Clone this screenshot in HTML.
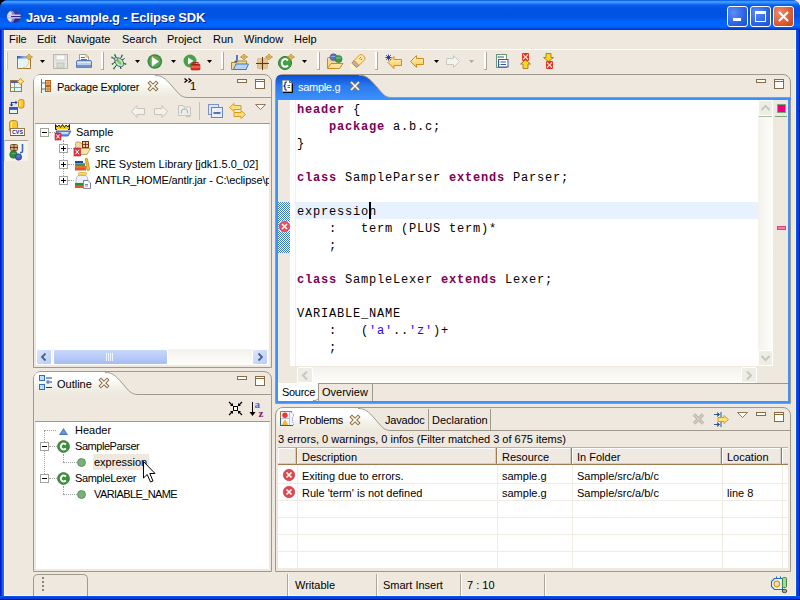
<!DOCTYPE html>
<html><head><meta charset="utf-8">
<style>
*{margin:0;padding:0;box-sizing:border-box}
html,body{width:800px;height:600px;overflow:hidden;background:#EEE8DF}
body{position:relative;font-family:"Liberation Sans",sans-serif;font-size:11px;color:#000}
.a{position:absolute}
.t{position:absolute;white-space:pre;line-height:13px}
svg{position:absolute;overflow:visible}
.code{position:absolute;font-family:"Liberation Mono",monospace;font-size:12px;letter-spacing:0.8px;line-height:17px;white-space:pre;color:#000}
.kw{color:#7F0055;font-weight:bold}
.str{color:#2A00FF}
</style></head><body>

<!-- window frame -->
<div class="a" style="left:0;top:0;width:8px;height:8px;background:#000"></div>
<div class="a" style="left:0;top:0;width:800px;height:600px;background:#0040D8;border-radius:8px 8px 0 0"></div>
<div class="a" style="left:0;top:30px;width:4px;height:570px;background:linear-gradient(90deg,#0014C0 0,#0020D0 1px,#0A58EC 2px,#1A6CF2 3px,#1A6CF2 4px)"></div>
<div class="a" style="left:796px;top:30px;width:4px;height:570px;background:linear-gradient(90deg,#0054F0 0,#0054F0 1px,#0040D8 1px,#0040D8 3px,#001878 3px)"></div>
<div class="a" style="left:0;top:596px;width:800px;height:4px;background:linear-gradient(#0054F0 0,#0054F0 1px,#0040D8 1px,#0040D8 3px,#001878 3px)"></div>
<div class="a" style="left:0;top:0;width:800px;height:30px;border-radius:8px 8px 0 0;background:linear-gradient(#0050E0 0px,#3C9AFF 1.5px,#3A96FF 2.5px,#0A5EEA 5px,#0054E3 8px,#0052E0 16px,#0062F8 21px,#0068FF 26px,#0058F0 27.5px,#0038C8 29.5px)"></div>
<div class="a" style="left:4px;top:30px;width:792px;height:566px;background:#EEE8DF;border-left:1px solid #FFF5E2;border-right:1px solid #FFF5E2;border-bottom:1px solid #FFF5E2"></div>

<!-- title -->
<svg style="left:7px;top:10px" width="14" height="13" viewBox="0 0 14 13"><defs><clipPath id="ec"><ellipse cx="7" cy="6.5" rx="6.8" ry="6.2"/></clipPath></defs><g clip-path="url(#ec)"><rect width="14" height="13" fill="#3C3C98"/><rect x="7" y="6" width="7" height="7" fill="#2A2A80"/><ellipse cx="2" cy="6.5" rx="5" ry="7" fill="#E8C8D8"/><ellipse cx="4" cy="6.5" rx="4" ry="6" fill="#8888C8"/><ellipse cx="2.5" cy="6.5" rx="2.5" ry="6" fill="#F0D8E8"/><rect x="0" y="4.5" width="14" height="1.5" fill="#C8C8F0"/><rect x="0" y="7" width="14" height="1.5" fill="#B8B8E8"/><rect x="4" y="6" width="10" height="1" fill="#2A2A80"/></g></svg>
<div class="t" style="left:26px;top:10px;color:#fff;font-weight:bold;font-size:13px;line-height:15px;letter-spacing:-0.2px;text-shadow:1px 1px 0 #0A1E8C">Java - sample.g - Eclipse SDK</div>
<!-- window buttons -->
<div class="a" style="left:727px;top:6px;width:21px;height:21px;border:1px solid #fff;border-radius:3px;background:radial-gradient(circle at 30% 30%,#5C8DF5,#2A63E6 60%,#1F4FD0)"></div>
<div class="a" style="left:733px;top:18px;width:8px;height:3px;background:#fff"></div>
<div class="a" style="left:750px;top:6px;width:21px;height:21px;border:1px solid #fff;border-radius:3px;background:radial-gradient(circle at 30% 30%,#5C8DF5,#2A63E6 60%,#1F4FD0)"></div>
<div class="a" style="left:755px;top:11px;width:11px;height:11px;border:1px solid #fff;border-top-width:3px"></div>
<div class="a" style="left:773px;top:6px;width:21px;height:21px;border:1px solid #fff;border-radius:3px;background:radial-gradient(circle at 30% 30%,#EC8A6E,#DC5B30 60%,#C8401A)"></div>
<svg style="left:778px;top:11px" width="11" height="11"><path d="M1 1L10 10M10 1L1 10" stroke="#fff" stroke-width="2"/></svg>

<!-- menu -->
<div class="t" style="left:9px;top:33px">File</div>
<div class="t" style="left:37px;top:33px">Edit</div>
<div class="t" style="left:67px;top:33px">Navigate</div>
<div class="t" style="left:122px;top:33px">Search</div>
<div class="t" style="left:167px;top:33px">Project</div>
<div class="t" style="left:213px;top:33px">Run</div>
<div class="t" style="left:244px;top:33px">Window</div>
<div class="t" style="left:294px;top:33px">Help</div>
<div class="a" style="left:4px;top:49px;width:792px;height:1px;background:#fff"></div>


<!-- toolbar -->
<div class="a" style="left:6px;top:52px;width:2px;height:18px;border-left:1px solid #fff;border-right:1px solid #C7C3AE"></div>
<div class="a" style="left:101px;top:52px;width:3px;height:18px;background:linear-gradient(90deg,#fff 0,#fff 2px,#ACA899 2px);border-bottom:1px solid #ACA899"></div>
<div class="a" style="left:221px;top:52px;width:3px;height:18px;background:linear-gradient(90deg,#fff 0,#fff 2px,#ACA899 2px);border-bottom:1px solid #ACA899"></div>
<div class="a" style="left:317px;top:52px;width:3px;height:18px;background:linear-gradient(90deg,#fff 0,#fff 2px,#ACA899 2px);border-bottom:1px solid #ACA899"></div>
<div class="a" style="left:375px;top:52px;width:3px;height:18px;background:linear-gradient(90deg,#fff 0,#fff 2px,#ACA899 2px);border-bottom:1px solid #ACA899"></div>
<div class="a" style="left:484px;top:52px;width:3px;height:18px;background:linear-gradient(90deg,#fff 0,#fff 2px,#ACA899 2px);border-bottom:1px solid #ACA899"></div>
<!-- dropdown arrows -->
<svg style="left:40px;top:60px" width="5" height="3"><path d="M0 0H5L2.5 3Z" fill="#000"/></svg>
<svg style="left:135px;top:60px" width="5" height="3"><path d="M0 0H5L2.5 3Z" fill="#000"/></svg>
<svg style="left:171px;top:60px" width="5" height="3"><path d="M0 0H5L2.5 3Z" fill="#000"/></svg>
<svg style="left:207px;top:60px" width="5" height="3"><path d="M0 0H5L2.5 3Z" fill="#000"/></svg>
<svg style="left:302px;top:60px" width="5" height="3"><path d="M0 0H5L2.5 3Z" fill="#000"/></svg>
<svg style="left:434px;top:60px" width="5" height="3"><path d="M0 0H5L2.5 3Z" fill="#000"/></svg>
<svg style="left:469px;top:60px" width="5" height="3"><path d="M0 0H5L2.5 3Z" fill="#A8A8A8"/></svg>
<!-- new -->
<svg style="left:17px;top:54px" width="16" height="15"><defs><linearGradient id="nw" x1="0" x2="1"><stop offset="0" stop-color="#2A58C0"/><stop offset="1" stop-color="#B8D4F4"/></linearGradient></defs><path d="M0.5 2.5V14.5H13.5V4" stroke="#A87838" fill="#E6F2FC"/><rect x="0" y="2" width="11" height="2.5" fill="url(#nw)"/><path d="M12 6Q12.5 12.5 5 14" stroke="#F8D050" stroke-width="1" fill="none"/><path d="M12 0L13.3 1.7L15.5 3L13.3 4.3L12 6L10.7 4.3L8.5 3L10.7 1.7Z" fill="#FFE890" stroke="#B88020" stroke-width="0.8"/><path d="M12 1.2V4.8M10 3H14" stroke="#B88020" stroke-width="0.7"/></svg>
<!-- save disabled -->
<svg style="left:53px;top:54px" width="15" height="15"><rect x="0.5" y="0.5" width="14" height="14" fill="#E6E6E0" stroke="#B8B8B0"/><rect x="3" y="1" width="9" height="5" fill="#FAFAF8" stroke="#C0C0B8" stroke-width="0.6"/><rect x="4" y="9" width="7" height="5" fill="#D8D8D0" stroke="#B0B8A8" stroke-width="0.6"/></svg>
<!-- print -->
<svg style="left:76px;top:54px" width="16" height="15"><path d="M3.5 7V0.5H10L12.5 3V7" fill="#FAFAF6" stroke="#98A890"/><path d="M10 0.5V3H12.5" stroke="#E89040" fill="none" stroke-width="0.8"/><path d="M5 3.5H9M5 5.5H11" stroke="#4070C0"/><path d="M0.5 8Q0.5 6.5 2 6.5H14Q15.5 6.5 15.5 8V13.5H0.5Z" fill="#B8CCEC" stroke="#5878B8"/><path d="M1 8.5H15" stroke="#E0ECFC"/><rect x="1" y="11" width="14" height="2.5" fill="#7090D0"/></svg>
<!-- debug bug -->
<svg style="left:111px;top:54px" width="17" height="16"><path d="M4 1L5.5 4.5M1 3.5L4.5 5M1.5 10L4 8M3 14.5L5.5 11M11 1.5L9.5 4.5M13.5 4.5L11 6M14.5 10L11.5 9M10 15L9 11.5" stroke="#3A2A1A" stroke-width="1"/><circle cx="4" cy="1" r="0.9" fill="#2A9A3A"/><circle cx="1" cy="3.5" r="0.9" fill="#2A9A3A"/><circle cx="1.5" cy="10" r="0.9" fill="#2A9A3A"/><circle cx="3" cy="14.5" r="0.9" fill="#2A9A3A"/><circle cx="11" cy="1.5" r="0.9" fill="#2A9A3A"/><circle cx="14.5" cy="10" r="0.9" fill="#2A9A3A"/><ellipse cx="8.3" cy="8.3" rx="5.2" ry="3.6" transform="rotate(45 8.3 8.3)" fill="#C8E8B0" stroke="#2A6A8A" stroke-width="0.9"/><ellipse cx="8.3" cy="8.3" rx="3" ry="1.5" transform="rotate(45 8.3 8.3)" fill="#8AC070"/><circle cx="5" cy="5" r="1.8" fill="#A8D8A0" stroke="#2A6A8A" stroke-width="0.7"/></svg>
<!-- run -->
<svg style="left:147px;top:54px" width="16" height="16"><circle cx="7.8" cy="7.5" r="7.3" fill="#3A8A42"/><circle cx="7.8" cy="7.5" r="5.8" fill="#58A458"/><path d="M5 2.5L12 7.5L5 12.5Z" fill="#fff"/><path d="M5 2.5L9 5.3" stroke="#F0A030" stroke-width="1"/><path d="M5 2.5V12.5" stroke="#D0E8D0" stroke-width="0.6"/></svg>
<!-- ext tools -->
<svg style="left:183px;top:54px" width="17" height="16"><circle cx="7" cy="7" r="6.5" fill="#48A048"/><path d="M5 3.5L10.5 7L5 10.5Z" fill="#fff"/><rect x="8" y="10" width="9" height="6" rx="1" fill="#E03020" stroke="#A01810" stroke-width="0.6"/><rect x="10" y="8.5" width="5" height="2" fill="none" stroke="#A01810" stroke-width="0.8"/><path d="M8 13H17" stroke="#F8D0C8" stroke-width="0.6"/></svg>
<!-- new java project -->
<svg style="left:231px;top:54px" width="18" height="16"><path d="M0.5 8.5H6L7 7H15.5V15.5H0.5Z" fill="#F0D890" stroke="#A88838"/><path d="M2.5 15.5L5 10H17.5L15 15.5Z" fill="#B8D4F4" stroke="#4878C0"/><path d="M6 1V6Q6 8 3.5 7.5" stroke="#3060B8" stroke-width="1.6" fill="none"/><path d="M13 0L14.3 1.7L16.5 3L14.3 4.3L13 6L11.7 4.3L9.5 3L11.7 1.7Z" fill="#FFE890" stroke="#B88020" stroke-width="0.8"/><path d="M13 1.2V4.8M11 3H15" stroke="#B88020" stroke-width="0.7"/></svg>
<!-- new package -->
<svg style="left:256px;top:54px" width="17" height="16"><rect x="1.5" y="4.5" width="4.5" height="4.5" rx="1" fill="#E8C890" stroke="#C8A070" stroke-width="0.6"/><rect x="7" y="4.5" width="4.5" height="4.5" rx="1" fill="#E8C890" stroke="#C8A070" stroke-width="0.6"/><rect x="1.5" y="10" width="4.5" height="4.5" rx="1" fill="#E8C890" stroke="#C8A070" stroke-width="0.6"/><rect x="7" y="10" width="4.5" height="4.5" rx="1" fill="#E8C890" stroke="#C8A070" stroke-width="0.6"/><path d="M6.5 3V16M0 9.5H13" stroke="#5A3A1A" stroke-width="1"/><path d="M13 0L14.3 1.7L16.5 3L14.3 4.3L13 6L11.7 4.3L9.5 3L11.7 1.7Z" fill="#FFE890" stroke="#B88020" stroke-width="0.8"/><path d="M13 1.2V4.8M11 3H15" stroke="#B88020" stroke-width="0.7"/></svg>
<!-- new class -->
<svg style="left:278px;top:54px" width="17" height="16"><circle cx="7" cy="9" r="6.5" fill="#46A046" stroke="#2C7A2C"/><path d="M10 6.5Q7 3.5 4.5 6.5Q3 9 4.5 11.5Q7 14 10 11.5" stroke="#fff" stroke-width="2" fill="none"/><path d="M13 0L14.3 1.7L16.5 3L14.3 4.3L13 6L11.7 4.3L9.5 3L11.7 1.7Z" fill="#FFE890" stroke="#B88020" stroke-width="0.8"/><path d="M13 1.2V4.8M11 3H15" stroke="#B88020" stroke-width="0.7"/></svg>
<!-- open type -->
<svg style="left:326px;top:53px" width="18" height="16"><path d="M1.5 15.5V5.5Q1.5 4.5 2.5 4.5H5L6 5.5H13.5V15.5Z" fill="#F8D890" stroke="#D08820"/><path d="M1.5 15.5L5 10.5H17L13.5 15.5Z" fill="#FCE4A0" stroke="#D08820"/><circle cx="7.5" cy="4.2" r="3.4" fill="#6070C0" stroke="#3A4A9A" stroke-width="0.6"/><path d="M5 3.5H10" stroke="#A8B0E8" stroke-width="0.8"/><circle cx="12.5" cy="6" r="3.6" fill="#3A9A48" stroke="#2A7A38" stroke-width="0.6"/><path d="M10 5H15" stroke="#A0D8A0" stroke-width="0.8"/></svg>
<!-- search flashlight -->
<svg style="left:349px;top:53px" width="18" height="17"><g transform="rotate(-45 9 8.5)"><ellipse cx="2.5" cy="8.5" rx="3" ry="3.5" fill="#FFF8C0"/><path d="M3.5 5.5L7 5V12L3.5 11.5Z" fill="#B8B0B8" stroke="#A07040" stroke-width="0.7"/><path d="M7 5H15Q17 5.5 17 8.5Q17 11.5 15 12H7Z" fill="#FCE8A0" stroke="#E09020" stroke-width="0.9"/><path d="M12 7.5H14M12 9.5H14" stroke="#3050B0" stroke-width="0.8"/></g></svg>
<!-- last edit -->
<svg style="left:385px;top:54px" width="18" height="16"><defs><linearGradient id="ya" x1="0" y1="0" x2="0" y2="1"><stop offset="0" stop-color="#FFF4C0"/><stop offset="1" stop-color="#F8C850"/></linearGradient></defs><path d="M9 2.5L3 8.5L9 14.5V11.5H16.5V5.5H9Z" fill="url(#ya)" stroke="#D88A10"/><path d="M3.5 0.5V6.5M0.5 3.5H6.5M1.2 1.2L5.8 5.8M5.8 1.2L1.2 5.8" stroke="#1A2AB0" stroke-width="0.9"/></svg>
<!-- back -->
<svg style="left:410px;top:55px" width="15" height="14"><path d="M6.5 0.5L0.5 6.5L6.5 12.5V9.5H13.5V3.5H6.5Z" fill="url(#ya)" stroke="#D88A10"/></svg>
<!-- forward disabled -->
<svg style="left:446px;top:55px" width="15" height="14"><path d="M7.5 0.5L13.5 6.5L7.5 12.5V9.5H0.5V3.5H7.5Z" fill="#F4F4EE" stroke="#C8C8C0"/></svg>
<!-- doc icon -->
<svg style="left:496px;top:54px" width="13" height="14"><rect x="0.5" y="0.5" width="10" height="13" fill="#fff" stroke="#6A9A6A"/><path d="M2 3H8" stroke="#3A5A9A"/><circle cx="2" cy="3" r="0.6" fill="#3A5A9A"/><rect x="2.5" y="5.5" width="9.5" height="7.5" fill="#fff" stroke="#3A5AA0"/><path d="M5 8H10M5 10.5H10" stroke="#3A5A9A"/><rect x="3.5" y="7.5" width="1" height="1" fill="#3A5A9A"/><rect x="3.5" y="10" width="1" height="1" fill="#3A5A9A"/></svg>
<!-- next annotation -->
<svg style="left:520px;top:53px" width="12" height="16"><rect x="2" y="0" width="7" height="8" rx="1" fill="#E83020"/><path d="M3 1.5L8 6.5M8 1.5L3 6.5" stroke="#FFD8D0" stroke-width="1.1"/><path d="M5.5 7L10.5 11H8V15.5H3V11H0.5Z" fill="#F8D820" stroke="#9A7010" stroke-width="0.8"/></svg>
<!-- prev annotation -->
<svg style="left:543px;top:53px" width="12" height="16"><path d="M5.5 8.5L10.5 4.5H8V0.5H3V4.5H0.5Z" fill="#F8D820" stroke="#9A7010" stroke-width="0.8"/><rect x="3" y="8" width="7" height="8" rx="1" fill="#E83020"/><path d="M4 9.5L9 14.5M9 9.5L4 14.5" stroke="#FFD8D0" stroke-width="1.1"/></svg>

<!-- shortcut bar -->
<svg style="left:10px;top:78px" width="15" height="15"><rect x="0.5" y="2.5" width="11" height="11" fill="#E6F4FA" stroke="#9A7848"/><rect x="1" y="3" width="10" height="2" fill="#2A50B0"/><path d="M1 4H10" stroke="#7AA0E0" stroke-width="0.5"/><path d="M4.5 5V13M1 9.5H11" stroke="#A89880"/><path d="M4.5 10V13" stroke="#60A060"/><path d="M10.5 0L11.8 2.2L14 3.5L11.8 4.8L10.5 7L9.2 4.8L7 3.5L9.2 2.2Z" fill="#FFE890" stroke="#C89020" stroke-width="0.8"/></svg>
<svg style="left:9px;top:99px" width="16" height="16"><path d="M2.5 6.5V3.5H7" stroke="#1A3AB0" stroke-width="1.2" fill="none"/><path d="M6.5 1.5L8.5 3.5L6.5 5.5Z" fill="#1A3AB0"/><path d="M0.5 5.5L2.5 7.5L4.5 5.5Z" fill="#1A3AB0"/><rect x="9.5" y="0.5" width="5.5" height="8.5" rx="2" fill="#F8C830" stroke="#C08A10" stroke-width="0.9"/><path d="M11 2V7.5" stroke="#FFF0A0" stroke-width="1"/><rect x="0.5" y="8.5" width="8" height="6" fill="#E8F4FA" stroke="#3A6A8A"/><rect x="1" y="9" width="7" height="1.8" fill="#2A50B0"/></svg>
<svg style="left:9px;top:120px" width="16" height="17"><rect x="0.5" y="0.5" width="8" height="12" rx="2.5" fill="#F8C830" stroke="#C08A10" stroke-width="0.9"/><path d="M2.5 2V11" stroke="#FFF0A0" stroke-width="1.2"/><rect x="1.5" y="8.5" width="14" height="7" fill="#fff" stroke="#9A7848"/><path d="M1.5 15.5H15.5" stroke="#3A5AB0"/><text x="8.5" y="14" font-family="Liberation Sans" font-size="6" font-weight="bold" fill="#10208A" text-anchor="middle" textLength="11" lengthAdjust="spacingAndGlyphs">CVS</text></svg>
<div class="a" style="left:4px;top:140px;width:24px;height:21px;background:#F6F2EC;border-top:1px solid #ACA899;border-left:1px solid #D8D2C4"></div>
<svg style="left:9px;top:143px" width="16" height="18"><rect x="1.5" y="1.5" width="7" height="6" rx="1" fill="#D8A878" stroke="#7A5030" stroke-width="0.9"/><path d="M5 1V8M1 4.5H9" stroke="#4A2A10" stroke-width="0.8"/><path d="M13.5 1V8Q13.5 10 11 9.5" stroke="#3A6AB8" stroke-width="1.6" fill="none"/><circle cx="4.5" cy="11.5" r="3.8" fill="#2E8A3E" stroke="#1A6A2A" stroke-width="0.6"/><path d="M2.5 10.5H6.5" stroke="#80C880" stroke-width="0.6"/><circle cx="9.5" cy="14" r="3.2" fill="#4A60B8" stroke="#2A3A90" stroke-width="0.6"/><path d="M8 13H11" stroke="#A0B0F0" stroke-width="0.6"/></svg>
<!-- main area -->

<!-- ===== Package Explorer ===== -->
<div class="a" style="left:33px;top:74px;width:239px;height:294px;border:1px solid #9D9A8D;border-radius:8px 8px 0 0;background:#EEE8DF"></div>
<!-- tab -->
<svg style="left:34px;top:75px" width="237" height="23"><defs><linearGradient id="tg" x1="0" y1="0" x2="0" y2="1"><stop offset="0" stop-color="#FFFFFF"/><stop offset="0.28" stop-color="#FFFFFF"/><stop offset="0.65" stop-color="#F4F3EA"/><stop offset="1" stop-color="#ECEADD"/></linearGradient></defs><path d="M0 22V6Q0 0 6 0H121C128 0 131 3 138 11C145 19 147 22 154 22Z" fill="url(#tg)"/><path d="M121 0.5C128 0.5 131 3 138 11C145 19 147 22.5 154 22.5H237" stroke="#9D9A8D" fill="none"/></svg>

<svg style="left:40px;top:79px" width="12" height="14"><path d="M1.5 0V14M1 4H5M1 10H5" stroke="#3A7A9A" stroke-width="1"/><rect x="5.5" y="1.5" width="5" height="5" fill="#F0C070" stroke="#B06020"/><rect x="5.5" y="7.5" width="5" height="5" fill="#F0C070" stroke="#B06020"/><path d="M8 2V6M6 4H10M8 8V12M6 10H10" stroke="#B06020" stroke-width="0.6"/></svg>
<div class="t" style="left:57px;top:81px;letter-spacing:-0.3px">Package Explorer</div>
<svg style="left:148px;top:81px" width="10" height="10"><path d="M2 2L8 8M8 2L2 8" stroke="#8E6A3A" stroke-width="3.6" stroke-linecap="square"/><path d="M2 2L8 8M8 2L2 8" stroke="#FFFFFF" stroke-width="1.6" stroke-linecap="square"/></svg>
<svg style="left:184px;top:78px" width="9" height="6"><path d="M0.5 0.5L3 2.5L0.5 4.5M4.5 0.5L7 2.5L4.5 4.5" stroke="#000" stroke-width="1.3" fill="none"/></svg>
<div class="t" style="left:190px;top:80px;font-size:11px">1</div>
<!-- min/max -->
<div class="a" style="left:237px;top:79px;width:10px;height:4px;border:1px solid #8A6A40;background:#fff"></div>
<div class="a" style="left:255px;top:79px;width:10px;height:10px;border:1px solid #8A6A40;background:linear-gradient(#fff 0,#fff 1px,#8A6A40 1px,#8A6A40 2px,#fff 2px)"></div>
<!-- view toolbar -->
<svg style="left:131px;top:105px" width="15" height="13"><path d="M6 0.5L0.5 6.5L6 12.5V9.5H13.5V3.5H6Z" fill="#F2F2EA" stroke="#C4C4BC"/></svg>
<svg style="left:154px;top:105px" width="15" height="13"><path d="M8 0.5L13.5 6.5L8 12.5V9.5H0.5V3.5H8Z" fill="#F2F2EA" stroke="#C4C4BC"/></svg>
<svg style="left:178px;top:104px" width="15" height="15"><path d="M0.5 3V1.5H5L6 3H12.5V11.5H0.5Z" fill="#F0F0EA" stroke="#C4C4BC"/><path d="M3.5 9.5V8Q3.5 5 6.5 5Q9.5 5 9.5 8V9.5" stroke="#A8B8D0" stroke-width="1.2" fill="none"/><path d="M6.5 3.5L4.5 6H8.5Z" fill="#B8D0B8"/><path d="M8 12.5H12.5" stroke="#C8C8C0" stroke-width="1.5"/></svg>
<div class="a" style="left:199px;top:102px;width:1px;height:18px;background:#C7C3AE"></div>
<svg style="left:208px;top:104px" width="15" height="14"><rect x="0.5" y="0.5" width="10" height="10" fill="#DDE6F6" stroke="#7A94C8"/><rect x="3.5" y="3.5" width="11" height="10" fill="#E8EEFA" stroke="#6A84C0"/><path d="M5.5 9H12.5" stroke="#1A3A98" stroke-width="1.4"/></svg>
<svg style="left:229px;top:103px" width="18" height="17"><path d="M5 0.5L0.5 4.5L5 8.5V6.5H12V2.5H5Z" fill="#FCE07A" stroke="#D89A20"/><path d="M12 7.5L16.5 11.5L12 15.5V13.5H5V9.5H12Z" fill="#FCE07A" stroke="#D89A20"/></svg>
<svg style="left:255px;top:104px" width="11" height="6"><path d="M0.5 0.5H10.5L5.5 5.5Z" fill="#fff" stroke="#9A7A50"/></svg>
<!-- tree area -->
<div class="a" style="left:35px;top:123px;width:235px;height:1px;background:#9D9A8D"></div>
<div class="a" style="left:36px;top:124px;width:233px;height:225px;background:#fff"></div>
<!-- tree lines -->
<div class="a" style="left:49px;top:132px;width:6px;border-top:1px dotted #A0A0A0"></div>
<div class="a" style="left:63px;top:140px;height:40px;border-left:1px dotted #A0A0A0"></div>
<div class="a" style="left:68px;top:148px;width:6px;border-top:1px dotted #A0A0A0"></div>
<div class="a" style="left:68px;top:164px;width:6px;border-top:1px dotted #A0A0A0"></div>
<div class="a" style="left:68px;top:180px;width:6px;border-top:1px dotted #A0A0A0"></div>
<!-- expand boxes -->
<div class="a" style="left:40px;top:128px;width:9px;height:9px;border:1px solid #A4A49C;background:#fff"></div><div class="a" style="left:42px;top:132px;width:5px;height:1px;background:#000"></div>
<div class="a" style="left:59px;top:144px;width:9px;height:9px;border:1px solid #A4A49C;background:#fff"></div><div class="a" style="left:61px;top:148px;width:5px;height:1px;background:#000"></div><div class="a" style="left:63px;top:146px;width:1px;height:5px;background:#000"></div>
<div class="a" style="left:59px;top:160px;width:9px;height:9px;border:1px solid #A4A49C;background:#fff"></div><div class="a" style="left:61px;top:164px;width:5px;height:1px;background:#000"></div><div class="a" style="left:63px;top:162px;width:1px;height:5px;background:#000"></div>
<div class="a" style="left:59px;top:176px;width:9px;height:9px;border:1px solid #A4A49C;background:#fff"></div><div class="a" style="left:61px;top:180px;width:5px;height:1px;background:#000"></div><div class="a" style="left:63px;top:178px;width:1px;height:5px;background:#000"></div>
<!-- tree icons -->
<svg style="left:54px;top:123px" width="18" height="18"><path d="M1.5 1.5L3 4L5 2L6.5 4.5L8.5 1.5L10.5 4.5L12 2L14 4L15.5 1.5V6.5H1.5Z" fill="#F8C818" stroke="#1A1A00" stroke-width="1"/><rect x="3" y="6" width="11" height="3" fill="#FCF0C0"/><path d="M2 8H17L14 13H4Z" fill="#6A9AE8" stroke="#2A50B8" stroke-width="0.8"/><path d="M5 9H15L13.5 11H6Z" fill="#C8DCF8"/><rect x="1" y="10" width="6" height="7" fill="#E03848" stroke="#B02030" stroke-width="0.6"/><path d="M2.3 11.5L5.7 15.5M5.7 11.5L2.3 15.5" stroke="#fff" stroke-width="1"/></svg>
<svg style="left:74px;top:140px" width="17" height="17"><path d="M1.5 5.5V3.5Q1.5 2 3 2H6L7 3.5H10V14.5H1.5Z" fill="#F0D8A0" stroke="#B89050" stroke-width="0.8"/><path d="M1.5 14.5L4 8.5H16.5L13 14.5Z" fill="#F8E4A8" stroke="#B89050" stroke-width="0.8"/><rect x="8.5" y="1.5" width="6" height="6" fill="#E8C8A0" stroke="#8A2A10"/><path d="M11.5 1.5V7.5M8.5 4.5H14.5" stroke="#5A2A10" stroke-width="0.8"/><rect x="0" y="8" width="6.5" height="8" fill="#E03848" stroke="#B02030" stroke-width="0.6"/><path d="M1.5 9.8L5 14.2M5 9.8L1.5 14.2" stroke="#fff" stroke-width="1"/></svg>
<svg style="left:74px;top:156px" width="17" height="17"><rect x="1" y="5" width="8" height="2" fill="#1A4AA8"/><rect x="1" y="7" width="10" height="3" fill="#3A9A4A"/><path d="M1 7.5H11" stroke="#80D080" stroke-width="0.5"/><rect x="1" y="10" width="11" height="4.5" fill="#D85A28"/><path d="M1 11H12" stroke="#F8A070" stroke-width="0.6"/><path d="M11.5 2.5Q13 1.5 13.5 3L15.5 13Q15.5 14.5 14 14.5L13 14L11.5 4Z" fill="#F8C030" stroke="#B07810" stroke-width="0.7"/></svg>
<svg style="left:74px;top:172px" width="17" height="17"><rect x="4.5" y="0.5" width="8" height="2.5" rx="1" fill="#F8E080" stroke="#C8A020" stroke-width="0.7"/><path d="M4 3.5Q2 5 2 8V12H14V8Q14 5 12 3.5Z" fill="#E8F0F8" stroke="#98A0B8" stroke-width="0.7"/><path d="M4 5Q3 7 3.5 10" stroke="#fff" stroke-width="1"/><rect x="1" y="11" width="8" height="2" fill="#2A8A3A"/><rect x="1" y="13" width="8" height="3" fill="#D85A28"/><path d="M9.5 8.5H14L16.5 11V16.5H9.5Z" fill="#fff" stroke="#6A6070" stroke-width="0.8"/><path d="M11 12.5H14M11 14H14" stroke="#3060C0" stroke-width="0.7"/></svg>
<div class="t" style="left:76px;top:126px">Sample</div>
<div class="t" style="left:95px;top:142px">src</div>
<div class="t" style="left:95px;top:158px">JRE System Library [jdk1.5.0_02]</div>
<div class="a" style="left:95px;top:172px;width:174px;height:16px;overflow:hidden"><div class="t" style="left:0;top:2px;letter-spacing:-0.15px">ANTLR_HOME/antlr.jar - C:\eclipse\plugins</div></div>
<!-- h scrollbar -->
<div class="a" style="left:36px;top:349px;width:233px;height:16px;background:linear-gradient(#F3F1EC,#FEFEFB)"></div>
<div class="a" style="left:36px;top:349px;width:16px;height:16px;border:1px solid #fff;border-radius:2px;background:linear-gradient(135deg,#DCE6FC,#B8CCF8)"></div>
<svg style="left:41px;top:353px" width="6" height="8"><path d="M4.5 0.5L1 4L4.5 7.5" stroke="#4D6185" stroke-width="1.8" fill="none"/></svg>
<div class="a" style="left:53px;top:349px;width:115px;height:16px;border:1px solid #fff;border-radius:2px;background:linear-gradient(#C8D8FC,#B4C8F8 60%,#A8BCF0)"></div>
<svg style="left:106px;top:353px" width="8" height="8"><path d="M0.5 0V8M2.5 0V8M4.5 0V8M6.5 0V8" stroke="#EEF4FE" stroke-width="1"/></svg>
<div class="a" style="left:252px;top:349px;width:16px;height:16px;border:1px solid #fff;border-radius:2px;background:linear-gradient(135deg,#DCE6FC,#B8CCF8)"></div>
<svg style="left:257px;top:353px" width="6" height="8"><path d="M1.5 0.5L5 4L1.5 7.5" stroke="#4D6185" stroke-width="1.8" fill="none"/></svg>

<!-- ===== Outline ===== -->
<div class="a" style="left:33px;top:371px;width:239px;height:201px;border:1px solid #9D9A8D;border-radius:8px 8px 0 0;background:#EEE8DF"></div>
<svg style="left:34px;top:372px" width="237" height="23"><path d="M0 22V7Q0 0 7 0H71C78 0 81 3 88 11C95 19 97 22 104 22Z" fill="url(#tg)"/><path d="M71 0.5C78 0.5 81 3 88 11C95 19 97 22.5 104 22.5H237" stroke="#9D9A8D" fill="none"/></svg>

<svg style="left:39px;top:375px" width="14" height="16"><rect x="0.5" y="0.5" width="5" height="5" fill="#C8DCF8" stroke="#2A70D0"/><rect x="0.5" y="9.5" width="5" height="5" fill="#C8DCF8" stroke="#2A70D0"/><path d="M7 3H13M7 12.5H13M11 7H13" stroke="#1A3A90" stroke-width="1"/><rect x="8" y="6" width="2" height="2" fill="#fff" stroke="#1A3A90" stroke-width="0.8"/></svg>
<div class="t" style="left:57px;top:378px">Outline</div>
<svg style="left:99px;top:378px" width="10" height="10"><path d="M2 2L8 8M8 2L2 8" stroke="#8E6A3A" stroke-width="3.6" stroke-linecap="square"/><path d="M2 2L8 8M8 2L2 8" stroke="#FFFFFF" stroke-width="1.6" stroke-linecap="square"/></svg>
<div class="a" style="left:237px;top:376px;width:10px;height:4px;border:1px solid #8A6A40;background:#fff"></div>
<div class="a" style="left:255px;top:376px;width:10px;height:10px;border:1px solid #8A6A40;background:linear-gradient(#fff 0,#fff 1px,#8A6A40 1px,#8A6A40 2px,#fff 2px)"></div>
<svg style="left:228px;top:401px" width="15" height="15"><rect x="5.5" y="5.5" width="4" height="4" fill="#fff" stroke="#000"/><path d="M1 1L4 4M14 1L11 4M1 14L4 11M14 14L11 11" stroke="#000" stroke-width="1.2"/><path d="M5 5V2L2 5Z M10 5V2L13 5Z M5 10V13L2 10Z M10 10V13L13 10Z" fill="#000"/></svg>
<svg style="left:249px;top:400px" width="17" height="17"><path d="M3.5 2V15" stroke="#000" stroke-width="1"/><path d="M0.5 12L3.5 16L6.5 12Z" fill="#000"/><text x="5.5" y="8" font-family="Liberation Serif" font-size="11" font-weight="bold" fill="#4A68C8">a</text><text x="9.5" y="16.5" font-family="Liberation Serif" font-size="11" font-weight="bold" fill="#801878">z</text></svg>
<div class="a" style="left:35px;top:421px;width:235px;height:1px;background:#9D9A8D"></div>
<div class="a" style="left:36px;top:422px;width:233px;height:147px;background:#fff"></div>
<!-- outline tree lines -->
<div class="a" style="left:44px;top:430px;width:12px;border-top:1px dotted #A0A0A0"></div>
<div class="a" style="left:44px;top:430px;height:44px;border-left:1px dotted #A0A0A0"></div>
<div class="a" style="left:49px;top:446px;width:8px;border-top:1px dotted #A0A0A0"></div>
<div class="a" style="left:49px;top:478px;width:8px;border-top:1px dotted #A0A0A0"></div>
<div class="a" style="left:63px;top:454px;height:8px;border-left:1px dotted #A0A0A0"></div>
<div class="a" style="left:63px;top:462px;width:14px;border-top:1px dotted #A0A0A0"></div>
<div class="a" style="left:63px;top:486px;height:8px;border-left:1px dotted #A0A0A0"></div>
<div class="a" style="left:63px;top:494px;width:14px;border-top:1px dotted #A0A0A0"></div>
<div class="a" style="left:40px;top:442px;width:9px;height:9px;border:1px solid #A4A49C;background:#fff"></div><div class="a" style="left:42px;top:446px;width:5px;height:1px;background:#000"></div>
<div class="a" style="left:40px;top:474px;width:9px;height:9px;border:1px solid #A4A49C;background:#fff"></div><div class="a" style="left:42px;top:478px;width:5px;height:1px;background:#000"></div>
<svg style="left:59px;top:428px" width="9" height="7"><path d="M4.5 0L9 7H0Z" fill="#4A78C0"/><path d="M4.5 1.5L7 6H2Z" fill="#6A98E0"/></svg>
<svg style="left:57px;top:440px" width="13" height="13"><circle cx="6.5" cy="6.5" r="6" fill="#3E8E3E" stroke="#2A6A2A" stroke-width="0.6"/><path d="M9 4.5Q6.5 2.5 4.5 4.5Q3 6.5 4.5 8.5Q6.5 10.5 9 8.5" stroke="#fff" stroke-width="1.8" fill="none"/></svg>
<svg style="left:57px;top:472px" width="13" height="13"><circle cx="6.5" cy="6.5" r="6" fill="#3E8E3E" stroke="#2A6A2A" stroke-width="0.6"/><path d="M9 4.5Q6.5 2.5 4.5 4.5Q3 6.5 4.5 8.5Q6.5 10.5 9 8.5" stroke="#fff" stroke-width="1.8" fill="none"/></svg>
<svg style="left:77px;top:458px" width="9" height="9"><circle cx="4.5" cy="4.5" r="4" fill="#7AB07A" stroke="#4A8A4A" stroke-width="0.8"/></svg>
<svg style="left:77px;top:490px" width="9" height="9"><circle cx="4.5" cy="4.5" r="4" fill="#7AB07A" stroke="#4A8A4A" stroke-width="0.8"/></svg>
<div class="a" style="left:93px;top:454px;width:56px;height:16px;background:#EEE8DF"></div>
<div class="t" style="left:75px;top:424px">Header</div>
<div class="t" style="left:75px;top:440px;letter-spacing:-0.45px">SampleParser</div>
<div class="t" style="left:94px;top:456px">expression</div>
<div class="t" style="left:75px;top:472px;letter-spacing:-0.35px">SampleLexer</div>
<div class="t" style="left:94px;top:488px;letter-spacing:-0.6px">VARIABLE_NAME</div>
<!-- cursor -->
<svg style="left:143px;top:461px" width="14" height="24"><path d="M0.5 0.5V17L4.2 13.5L7.5 21L10 20L6.8 12.5H12Z" fill="#fff" stroke="#000"/></svg>


<!-- ===== Editor ===== -->
<div class="a" style="left:275px;top:74px;width:516px;height:330px;border:1px solid #9D9A8D;border-radius:8px 8px 0 0;background:#EEE8DF"></div>
<div class="a" style="left:276px;top:97px;width:514px;height:306px;background:#3D92FC"></div>
<svg style="left:276px;top:75px" width="515" height="25"><defs><linearGradient id="bg" x1="0" y1="0" x2="0" y2="1"><stop offset="0" stop-color="#0A4ED6"/><stop offset="0.45" stop-color="#2A7AF0"/><stop offset="1" stop-color="#3D92FC"/></linearGradient></defs><path d="M0 25V5Q0 0 5 0H83C90 0 93 3 100 11C107 19 109 22.5 115 22.5H515V25Z" fill="url(#bg)"/><path d="M83 0.5C90 0.5 93 3 100 11C107 19 109 22.5 115 22.5H514" stroke="#9D9A8D" fill="none"/></svg>
<svg style="left:282px;top:80px" width="11" height="13"><path d="M1 12.5H10.5V3.5" stroke="#000" fill="none"/><path d="M0.5 0.5H7.5L9.5 2.5V11.5H0.5Z" fill="#FFFFF4" stroke="#9AB080" stroke-width="0.8"/><path d="M7.5 0.5V2.5H9.5" stroke="#000" stroke-width="0.6" fill="none"/><path d="M5 2H4Q3 2 3 3V5L2 6L3 7V9Q3 10 4 10H5" stroke="#0A1A9A" stroke-width="1.1" fill="none"/><path d="M5.5 5.5H8M5.5 7.5H8" stroke="#2A7A8A" stroke-width="1"/></svg>
<div class="t" style="left:298px;top:81px;color:#fff;letter-spacing:-0.3px">sample.g</div>
<svg style="left:350px;top:81px" width="10" height="10"><path d="M1 1L9 9M9 1L1 9" stroke="#9E7C50" stroke-width="3"/><path d="M1 1L9 9M9 1L1 9" stroke="#FFFFFF" stroke-width="1.4"/></svg>
<div class="a" style="left:756px;top:79px;width:10px;height:4px;border:1px solid #8A6A40;background:#fff"></div>
<div class="a" style="left:774px;top:79px;width:10px;height:10px;border:1px solid #8A6A40;background:linear-gradient(#fff 0,#fff 1px,#8A6A40 1px,#8A6A40 2px,#fff 2px)"></div>
<!-- content -->
<div class="a" style="left:278px;top:100px;width:510px;height:301px;background:#EEE8DF"></div>
<div class="a" style="left:290px;top:100px;width:468px;height:266px;background:#fff"></div>
<div class="a" style="left:295px;top:100px;width:1px;height:266px;background:#F1EFE6"></div>
<div class="a" style="left:296px;top:202px;width:462px;height:17px;background:#E8F2FE"></div>
<!-- range indicator -->
<svg style="left:278px;top:202px" width="12" height="51"><defs><pattern id="hp" width="2" height="2" patternUnits="userSpaceOnUse"><rect width="2" height="2" fill="#fff"/><rect width="1" height="1" fill="#3C78D8"/><rect x="1" y="1" width="1" height="1" fill="#3C78D8"/></pattern></defs><rect width="12" height="51" fill="url(#hp)"/></svg>
<svg style="left:278px;top:220px" width="13" height="13"><circle cx="6.5" cy="6.5" r="6" fill="#fff"/><circle cx="6.5" cy="6.5" r="5.2" fill="#E8505A" stroke="#C02030" stroke-width="0.6"/><path d="M4 4L9 9M9 4L4 9" stroke="#fff" stroke-width="1.5"/></svg>
<div class="code" style="left:297px;top:102px"><span class="kw">header</span> {
    <span class="kw">package</span> a.b.c;
}

<span class="kw">class</span> SampleParser <span class="kw">extends</span> Parser;

expression
    :   term (PLUS term)*
    ;

<span class="kw">class</span> SampleLexer <span class="kw">extends</span> Lexer;

VARIABLE_NAME
    :   (<span class="str">'a'</span>..<span class="str">'z'</span>)+
    ;</div>
<div class="a" style="left:369px;top:202px;width:2px;height:17px;background:#000"></div>
<!-- v scrollbar -->
<div class="a" style="left:758px;top:100px;width:15px;height:266px;background:linear-gradient(90deg,#F3F1EC,#FEFEFB)"></div>
<div class="a" style="left:758px;top:100px;width:15px;height:16px;border:1px solid #fff;border-radius:2px;background:#EEEDE5"></div>
<svg style="left:761px;top:105px" width="9" height="6"><path d="M0.5 5L4.5 1L8.5 5" stroke="#C9C7BA" stroke-width="2" fill="none"/></svg>
<div class="a" style="left:758px;top:350px;width:15px;height:16px;border:1px solid #fff;border-radius:2px;background:#EEEDE5"></div>
<svg style="left:761px;top:355px" width="9" height="6"><path d="M0.5 1L4.5 5L8.5 1" stroke="#C9C7BA" stroke-width="2" fill="none"/></svg>
<!-- h scrollbar -->
<div class="a" style="left:297px;top:367px;width:459px;height:16px;background:linear-gradient(#F3F1EC,#FEFEFB)"></div>
<div class="a" style="left:297px;top:367px;width:16px;height:16px;border:1px solid #fff;border-radius:2px;background:#EEEDE5"></div>
<svg style="left:302px;top:371px" width="6" height="9"><path d="M5 0.5L1 4.5L5 8.5" stroke="#C9C7BA" stroke-width="2" fill="none"/></svg>
<div class="a" style="left:741px;top:367px;width:16px;height:16px;border:1px solid #fff;border-radius:2px;background:#EEEDE5"></div>
<svg style="left:746px;top:371px" width="6" height="9"><path d="M1 0.5L5 4.5L1 8.5" stroke="#C9C7BA" stroke-width="2" fill="none"/></svg>
<!-- overview ruler -->
<div class="a" style="left:777px;top:104px;width:9px;height:9px;background:#F00080;border:1px solid #78A878"></div>
<div class="a" style="left:775px;top:116px;width:12px;height:1px;background:#78A878"></div><div class="a" style="left:759px;top:116px;width:13px;height:1px;background:#A8C0A0"></div>
<div class="a" style="left:777px;top:226px;width:9px;height:4px;background:#F080B0;border:1px solid #E04080"></div>
<!-- bottom tabs -->
<div class="a" style="left:318px;top:383px;width:470px;height:1px;background:#9D9A8D"></div>
<div class="a" style="left:278px;top:383px;width:40px;height:18px;background:#fff"></div>
<div class="a" style="left:318px;top:383px;width:1px;height:18px;background:#9D9A8D"></div>
<div class="a" style="left:372px;top:384px;width:1px;height:17px;background:#9D9A8D"></div>
<svg style="left:313px;top:396px" width="6" height="5"><path d="M5.5 0V1Q5.5 4.5 1 4.5H0" stroke="#9D9A8D" fill="none"/></svg>
<div class="t" style="left:282px;top:386px;letter-spacing:-0.3px">Source</div>
<div class="t" style="left:322px;top:386px">Overview</div>

<!-- ===== Problems ===== -->
<div class="a" style="left:275px;top:407px;width:516px;height:165px;border:1px solid #9D9A8D;border-radius:8px 8px 0 0;background:#EEE8DF"></div>
<svg style="left:277px;top:408px" width="513" height="23"><path d="M0 22V6Q0 0 6 0H81C88 0 91 3 98 11C105 19 107 22 114 22Z" fill="url(#tg)"/><path d="M81 0.5C88 0.5 91 3 98 11C105 19 107 22.5 114 22.5H513" stroke="#9D9A8D" fill="none"/></svg>

<div class="a" style="left:428px;top:409px;width:1px;height:21px;background:#9D9A8D"></div>
<svg style="left:280px;top:411px" width="15" height="15"><rect x="0.5" y="0.5" width="13" height="14" fill="#F2F6FC"/><path d="M0.5 15V0.5H12" stroke="#A07840" fill="none"/><path d="M0.5 7.5V14.5H13" stroke="#2A6078" fill="none"/><path d="M1 7.5H10M9.5 1V14" stroke="#B8C4D8"/><path d="M11 1L13.5 3V5L12.5 6V11L13.5 12.5V14" stroke="#7090D0" fill="none" stroke-width="0.8" stroke-dasharray="1.5 0.8"/><circle cx="5" cy="4.3" r="2.7" fill="#E83838"/><path d="M2.5 13.5L5 9L7.5 13.5Z" fill="#F4C020" stroke="#E0A010" stroke-width="0.6"/></svg>
<div class="t" style="left:299px;top:414px;letter-spacing:-0.3px">Problems</div>
<svg style="left:350px;top:415px" width="10" height="10"><path d="M2 2L8 8M8 2L2 8" stroke="#8E6A3A" stroke-width="3.6" stroke-linecap="square"/><path d="M2 2L8 8M8 2L2 8" stroke="#FFFFFF" stroke-width="1.6" stroke-linecap="square"/></svg>
<div class="t" style="left:385px;top:414px;letter-spacing:-0.2px">Javadoc</div>
<div class="t" style="left:432px;top:414px">Declaration</div><div class="a" style="left:490px;top:409px;width:1px;height:21px;background:#9D9A8D"></div>
<svg style="left:692px;top:413px" width="13" height="12"><path d="M2 1.5L11 10.5M11 1.5L2 10.5" stroke="#B8B4A8" stroke-width="3.2"/><path d="M2 1.5L11 10.5M11 1.5L2 10.5" stroke="#D8CCC8" stroke-width="1.4"/></svg>
<svg style="left:714px;top:412px" width="16" height="16"><path d="M0 2.5H5M3.5 0.5L5.5 2.5L3.5 4.5M7 0V5M0 12.5H5M3.5 10.5L5.5 12.5L3.5 14.5M7 10V15" stroke="#2A5A88" stroke-width="1"/><path d="M4 5.5H10V3.5L14.5 7.5L10 11.5V9.5H4Z" fill="#FCE07A" stroke="#D89A20"/></svg>
<svg style="left:737px;top:412px" width="11" height="6"><path d="M0.5 0.5H10.5L5.5 5.5Z" fill="#fff" stroke="#9A7A50"/></svg>
<div class="a" style="left:756px;top:412px;width:10px;height:4px;border:1px solid #8A6A40;background:#fff"></div>
<div class="a" style="left:774px;top:412px;width:10px;height:10px;border:1px solid #8A6A40;background:linear-gradient(#fff 0,#fff 1px,#8A6A40 1px,#8A6A40 2px,#fff 2px)"></div>
<div class="t" style="left:278px;top:433px">3 errors, 0 warnings, 0 infos (Filter matched 3 of 675 items)</div>
<!-- table -->
<div class="a" style="left:278px;top:447px;width:510px;height:122px;background:#fff"></div>
<div class="a" style="left:278px;top:447px;width:510px;height:18px;background:#EFE9E1;border-top:1px solid #BCB0A0;border-bottom:1px solid #A07A50"></div>
<div class="a" style="left:278px;top:448px;width:510px;height:1px;background:#fff"></div>
<div class="a" style="left:278px;top:463px;width:510px;height:1px;background:#D4CCBE"></div>
<div class="a" style="left:278px;top:448px;width:1px;height:15px;background:#fff"></div>
<div class="a" style="left:295px;top:448px;width:3px;height:16px;border-left:1px solid #D4CCBE;border-right:1px solid #fff;background:#A07A50"></div>
<div class="a" style="left:495px;top:448px;width:3px;height:16px;border-left:1px solid #D4CCBE;border-right:1px solid #fff;background:#A07A50"></div>
<div class="a" style="left:570px;top:448px;width:3px;height:16px;border-left:1px solid #D4CCBE;border-right:1px solid #fff;background:#A07A50"></div>
<div class="a" style="left:720px;top:448px;width:3px;height:16px;border-left:1px solid #D4CCBE;border-right:1px solid #fff;background:#A07A50"></div>
<div class="a" style="left:780px;top:448px;width:3px;height:16px;border-left:1px solid #D4CCBE;border-right:1px solid #fff;background:#A07A50"></div>
<div class="t" style="left:302px;top:451px">Description</div>
<div class="t" style="left:502px;top:451px">Resource</div>
<div class="t" style="left:577px;top:451px">In Folder</div>
<div class="t" style="left:727px;top:451px">Location</div>
<!-- grid -->
<div class="a" style="left:297px;top:465px;width:1px;height:104px;background:#F0EBE3"></div>
<div class="a" style="left:497px;top:465px;width:1px;height:104px;background:#F0EBE3"></div>
<div class="a" style="left:572px;top:465px;width:1px;height:104px;background:#F0EBE3"></div>
<div class="a" style="left:722px;top:465px;width:1px;height:104px;background:#F0EBE3"></div>
<div class="a" style="left:782px;top:465px;width:1px;height:104px;background:#F0EBE3"></div>
<div class="a" style="left:278px;top:483px;width:510px;height:1px;background:#F0EBE3"></div>
<div class="a" style="left:278px;top:500px;width:510px;height:1px;background:#F0EBE3"></div>
<div class="a" style="left:278px;top:517px;width:510px;height:1px;background:#F0EBE3"></div>
<div class="a" style="left:278px;top:534px;width:510px;height:1px;background:#F0EBE3"></div>
<div class="a" style="left:278px;top:551px;width:510px;height:1px;background:#F0EBE3"></div>
<div class="a" style="left:278px;top:568px;width:510px;height:1px;background:#F0EBE3"></div>
<svg style="left:283px;top:469px" width="12" height="12"><circle cx="6" cy="6" r="5.7" fill="#E04850" stroke="#C03038" stroke-width="0.6"/><path d="M3.5 3.5L8.5 8.5M8.5 3.5L3.5 8.5" stroke="#fff" stroke-width="1.6"/></svg>
<svg style="left:283px;top:486px" width="12" height="12"><circle cx="6" cy="6" r="5.7" fill="#E04850" stroke="#C03038" stroke-width="0.6"/><path d="M3.5 3.5L8.5 8.5M8.5 3.5L3.5 8.5" stroke="#fff" stroke-width="1.6"/></svg>
<div class="t" style="left:302px;top:470px">Exiting due to errors.</div>
<div class="t" style="left:502px;top:470px">sample.g</div>
<div class="t" style="left:577px;top:470px">Sample/src/a/b/c</div>
<div class="t" style="left:302px;top:487px">Rule 'term' is not defined</div>
<div class="t" style="left:502px;top:487px">sample.g</div>
<div class="t" style="left:577px;top:487px">Sample/src/a/b/c</div>
<div class="t" style="left:727px;top:487px">line 8</div>

<!-- ===== Status bar ===== -->
<div class="a" style="left:33px;top:574px;width:55px;height:22px;border:1px solid #9D9A8D;border-bottom:none;border-radius:5px 5px 0 0"></div>
<div class="a" style="left:42px;top:577px;width:2px;height:2px;background:#8A8678"></div>
<div class="a" style="left:42px;top:581px;width:2px;height:2px;background:#8A8678"></div>
<div class="a" style="left:42px;top:585px;width:2px;height:2px;background:#8A8678"></div>
<div class="a" style="left:42px;top:589px;width:2px;height:2px;background:#8A8678"></div>
<div class="a" style="left:287px;top:574px;width:2px;height:22px;border-left:1px solid #ACA899;background:#fff"></div>
<div class="a" style="left:376px;top:574px;width:2px;height:22px;border-left:1px solid #ACA899;background:#fff"></div>
<div class="a" style="left:460px;top:574px;width:2px;height:22px;border-left:1px solid #ACA899;background:#fff"></div>
<div class="a" style="left:544px;top:574px;width:2px;height:22px;border-left:1px solid #ACA899;background:#fff"></div>
<div class="t" style="left:295px;top:579px">Writable</div>
<div class="t" style="left:383px;top:579px">Smart Insert</div>
<div class="t" style="left:467px;top:579px">7 : 10</div>
<svg style="left:770px;top:576px" width="18" height="18"><path d="M4.5 2.5H12.5V13.5H4.5L1.5 10.5V5.5Z" stroke="#1A6ACF" stroke-width="1.1" fill="#F6F0EE"/><path d="M6.5 0.5V2.5M10.5 0.5V2.5" stroke="#1A6ACF"/><circle cx="6.8" cy="8" r="2.8" stroke="#D4A000" stroke-width="1.2" fill="#F4DCD4"/><rect x="12.5" y="1.5" width="4" height="10" rx="1" fill="#A8D898" stroke="#3A8A4A"/><ellipse cx="14.5" cy="15" rx="2.3" ry="1.7" fill="#88C078" stroke="#3A2A10" stroke-width="0.8"/></svg>

</body></html>
